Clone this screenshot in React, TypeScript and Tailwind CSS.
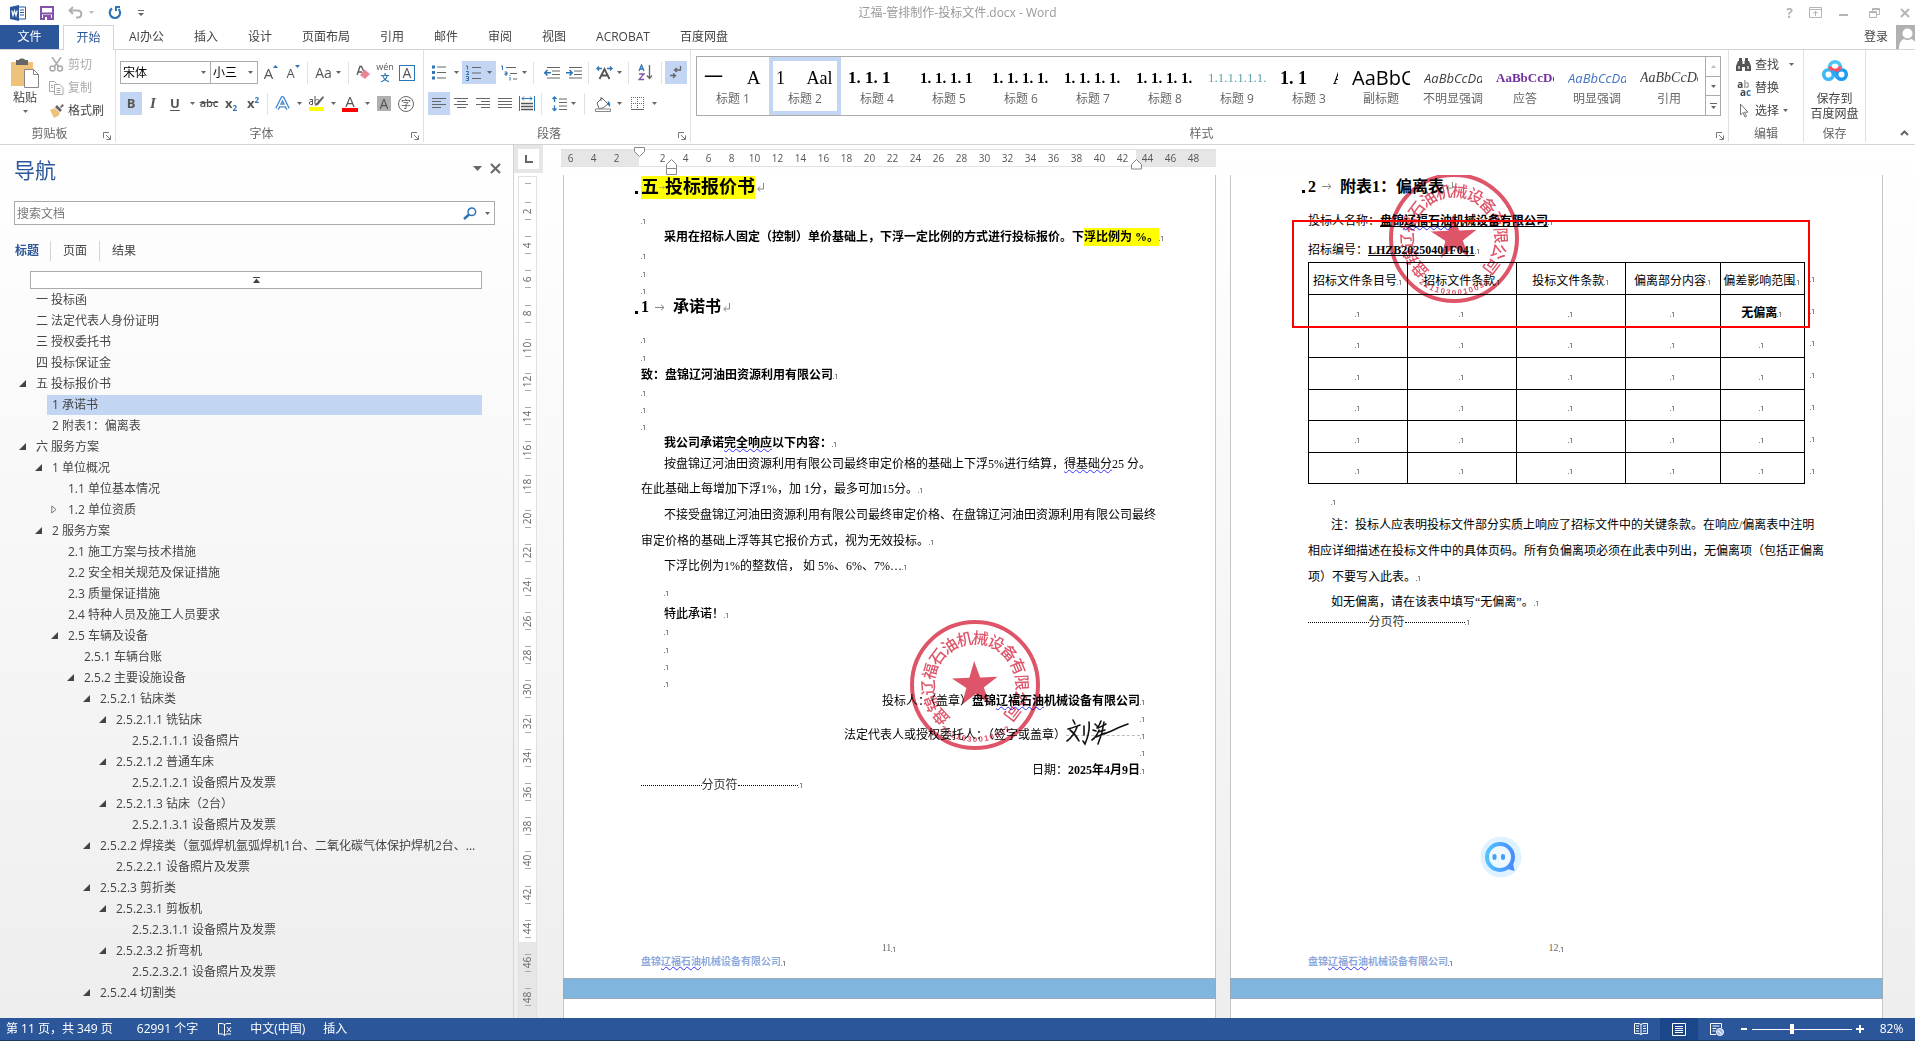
import type { ReactNode } from "react"
import { clsx } from "clsx"

const UI_FONT = "font-['Open_Sans','Noto_Sans_CJK_SC',sans-serif]"
const DOC_FONT = "font-['Liberation_Serif','Noto_Sans_CJK_SC',serif]"

const MENU_TABS = ["AI办公", "插入", "设计", "页面布局", "引用", "邮件", "审阅", "视图", "ACROBAT", "百度网盘"]

type OutlineItem = { level: number; text: string; state?: "open" | "closed"; selected?: boolean }

const OUTLINE: OutlineItem[] = [
  { level: 0, text: "一 投标函" },
  { level: 0, text: "二 法定代表人身份证明" },
  { level: 0, text: "三 授权委托书" },
  { level: 0, text: "四 投标保证金" },
  { level: 0, text: "五 投标报价书", state: "open" },
  { level: 1, text: "1 承诺书", selected: true },
  { level: 1, text: "2 附表1：偏离表" },
  { level: 0, text: "六 服务方案", state: "open" },
  { level: 1, text: "1 单位概况", state: "open" },
  { level: 2, text: "1.1 单位基本情况" },
  { level: 2, text: "1.2 单位资质", state: "closed" },
  { level: 1, text: "2 服务方案", state: "open" },
  { level: 2, text: "2.1 施工方案与技术措施" },
  { level: 2, text: "2.2 安全相关规范及保证措施" },
  { level: 2, text: "2.3 质量保证措施" },
  { level: 2, text: "2.4 特种人员及施工人员要求" },
  { level: 2, text: "2.5 车辆及设备", state: "open" },
  { level: 3, text: "2.5.1 车辆台账" },
  { level: 3, text: "2.5.2 主要设施设备", state: "open" },
  { level: 4, text: "2.5.2.1 钻床类", state: "open" },
  { level: 5, text: "2.5.2.1.1 铣钻床", state: "open" },
  { level: 6, text: "2.5.2.1.1.1 设备照片" },
  { level: 5, text: "2.5.2.1.2 普通车床", state: "open" },
  { level: 6, text: "2.5.2.1.2.1 设备照片及发票" },
  { level: 5, text: "2.5.2.1.3 钻床（2台）", state: "open" },
  { level: 6, text: "2.5.2.1.3.1 设备照片及发票" },
  { level: 4, text: "2.5.2.2 焊接类（氩弧焊机氩弧焊机1台、二氧化碳气体保护焊机2台、...", state: "open" },
  { level: 5, text: "2.5.2.2.1 设备照片及发票" },
  { level: 4, text: "2.5.2.3 剪折类", state: "open" },
  { level: 5, text: "2.5.2.3.1 剪板机", state: "open" },
  { level: 6, text: "2.5.2.3.1.1 设备照片及发票" },
  { level: 5, text: "2.5.2.3.2 折弯机", state: "open" },
  { level: 6, text: "2.5.2.3.2.1 设备照片及发票" },
  { level: 4, text: "2.5.2.4 切割类", state: "open" },
]

const STYLES = [
  { name: "标题 1", sample: "一　 A", css: "text-[19px] font-['Liberation_Serif','Noto_Sans_CJK_SC']" },
  { name: "标题 2", sample: "1　 Aal", css: "text-[18px] font-['Liberation_Serif','Noto_Sans_CJK_SC']", active: true },
  { name: "标题 4", sample: "1. 1. 1", css: "text-[17px] font-bold font-['Liberation_Serif']" },
  { name: "标题 5", sample: "1. 1. 1. 1", css: "text-[15px] font-bold font-['Liberation_Serif']" },
  { name: "标题 6", sample: "1. 1. 1. 1.", css: "text-[15px] font-bold font-['Liberation_Serif']" },
  { name: "标题 7", sample: "1. 1. 1. 1.", css: "text-[15px] font-bold font-['Liberation_Serif']" },
  { name: "标题 8", sample: "1. 1. 1. 1.", css: "text-[15px] font-bold font-['Liberation_Serif']" },
  { name: "标题 9", sample: "1.1.1.1.1.1.", css: "text-[13px] text-[#5fa3a8] font-['Liberation_Serif']" },
  { name: "标题 3", sample: "1. 1　  A", css: "text-[18px] font-bold font-['Liberation_Serif','Noto_Sans_CJK_SC']" },
  { name: "副标题", sample: "AaBbC", css: "text-[20px]" },
  { name: "不明显强调", sample: "AaBbCcDd", css: "text-[13px] italic text-[#404040]" },
  { name: "应答", sample: "AaBbCcDd", css: "text-[13px] font-bold text-[#7030a0] font-['Liberation_Serif']" },
  { name: "明显强调", sample: "AaBbCcDd", css: "text-[13px] italic text-[#4472c4]" },
  { name: "引用", sample: "AaBbCcDd", css: "text-[14px] italic text-[#404040] font-['Liberation_Serif']" },
]

const TABLE_HEAD = ["招标文件条目号", "招标文件条款", "投标文件条款", "偏离部分内容", "偏差影响范围"]

function evens(from: number, to: number) {
  const out: number[] = []
  for (let n = from; n <= to; n += 2) out.push(n)
  return out
}

/* ---------- small shared pieces ---------- */

function Caret({ className = "text-[#666]" }: { className?: string }) {
  return (
    <svg width="5" height="3" viewBox="0 0 5 3" className={clsx("shrink-0", className)} fill="currentColor">
      <path d="M0 0h5L2.500 3z" />
    </svg>
  )
}

function CaretBtn({ label, className = "w-3" }: { label: string; className?: string }) {
  return (
    <button type="button" aria-label={label} className={clsx("flex h-[23px] shrink-0 items-center justify-center", className)}>
      <Caret />
    </button>
  )
}

function Tool({ label, className = "w-[22px]", on, children }: { label: string; className?: string; on?: boolean; children: ReactNode }) {
  return (
    <button
      type="button"
      aria-label={label}
      className={clsx("flex h-[23px] shrink-0 items-center justify-center text-[#555]", className, on && "bg-[#c2d5f2]")}
    >
      {children}
    </button>
  )
}

function Sep() {
  return <span className="mx-[3px] h-[22px] w-px shrink-0 bg-[#e1e1e1]" />
}

function Group({ title, className, launcher, children }: { title: string; className?: string; launcher?: boolean; children: ReactNode }) {
  return (
    <section className={clsx("flex shrink-0 flex-col border-r border-[#e1e1e1]", className)}>
      <div className="flex-1">{children}</div>
      <div className="flex h-4 items-center text-[#666]">
        <span className="flex-1 text-center">{title}</span>
        {launcher && (
          <button type="button" aria-label={title + "设置"} className="w-4 pl-1 pt-1">
            <svg width="8" height="8" viewBox="0 0 8 8" fill="none" stroke="#777">
              <path d="M.5 6V.5H6M3 3l4 4M7.500 3.500v4h-4" />
            </svg>
          </button>
        )}
      </div>
    </section>
  )
}

/* ---------- title bar ---------- */

function TitleBar() {
  return (
    <header className="flex h-[25px] items-center justify-between">
      <div className="flex w-[220px] items-center pl-2.5">
        <svg width="16" height="16" viewBox="0 0 16 16" aria-label="Word">
          <path d="M8 2h7.500v12H8z" fill="#fff" stroke="#2b579a" />
          <path d="M10 5h4M10 7.500h4M10 10h4" stroke="#2b579a" />
          <path d="M0 2l9-2v16l-9-2z" fill="#2b579a" />
          <path d="M1.800 5.500l1.200 5 1.500-4.500L6 10.500l1.200-5" stroke="#fff" fill="none" strokeWidth="1.200" />
        </svg>
        <button type="button" aria-label="保存" className="ml-3.5">
          <svg width="14" height="14" viewBox="0 0 14 14">
            <path d="M1 1h12v12H1z" fill="#fff" stroke="#8452a8" strokeWidth="2" />
            <path d="M1 7.500h12" stroke="#8452a8" strokeWidth="2" />
            <path d="M3 9h8v4H3z" fill="#8452a8" />
            <path d="M5 11h2v3H5z" fill="#fff" />
          </svg>
        </button>
        <button type="button" aria-label="撤消" className="ml-3.5">
          <svg width="15" height="13" viewBox="0 0 15 13" fill="none" stroke="#b0b0b0" strokeWidth="2">
            <path d="M5 1L1.500 4.500 5 8M2 4.500h7.500c5 0 5 7 0 7H8" />
          </svg>
        </button>
        <span className="ml-1.5"><Caret className="text-[#bbb]" /></span>
        <button type="button" aria-label="重复" className="ml-3.5">
          <svg width="14" height="14" viewBox="0 0 14 14" fill="none" stroke="#2e75b6" strokeWidth="2.200">
            <path d="M4 2.500A5.200 5.200 0 1 0 10.500 3" />
            <path d="M7.500 1h4.500M8 0v5" strokeWidth="2" />
          </svg>
        </button>
        <button type="button" aria-label="自定义快速访问工具栏" className="ml-4">
          <svg width="6" height="6" viewBox="0 0 6 6" fill="#666"><path d="M0 0h6v1H0zM0 3h6L3 6z" /></svg>
        </button>
      </div>
      <h1 className="text-[#999]">辽福-管排制作-投标文件.docx - Word</h1>
      <div className="flex w-[220px] items-center justify-end gap-4 pr-[5px] text-[#b5b5b5]">
        <button type="button" aria-label="帮助" className="text-sm font-bold">?</button>
        <button type="button" aria-label="功能区显示选项">
          <svg width="13" height="11" viewBox="0 0 13 11" fill="none" stroke="currentColor"><path d="M.5.500h12v10H.5zM.5 2.500h12M6.500 9V4.500M4 6.500l2.500-2 2.500 2" /></svg>
        </button>
        <button type="button" aria-label="最小化">
          <svg width="11" height="10" viewBox="0 0 11 10" fill="currentColor"><path d="M1 6h9v2H1z" /></svg>
        </button>
        <button type="button" aria-label="还原" className="ml-1">
          <svg width="11" height="10" viewBox="0 0 11 10" fill="none" stroke="currentColor"><path d="M.5 3.500h7v6h-7zM.5 4.500h7M3.500 3V.5h7v6H8M3.500 1.500h7" /></svg>
        </button>
        <button type="button" aria-label="关闭" className="ml-1">
          <svg width="10" height="10" viewBox="0 0 10 10" stroke="currentColor" strokeWidth="2"><path d="M1 1l8 8M9 1L1 9" /></svg>
        </button>
      </div>
    </header>
  )
}

function MenuTabs() {
  return (
    <nav className="flex h-[25px] items-stretch border-b border-[#d4d4d4]">
      <button type="button" className="w-[59px] bg-[#2b579a] text-white">文件</button>
      <button type="button" className="-mb-px ml-1 w-[51px] border border-b-0 border-[#d4d4d4] bg-white text-[#2b579a]">开始</button>
      {MENU_TABS.map((tab) => (
        <button key={tab} type="button" className="px-[15px] text-[#444]">{tab}</button>
      ))}
      <div className="ml-auto flex items-stretch">
        <button type="button" className="pr-2 text-[#444]">登录</button>
        <svg width="19" height="24" viewBox="0 0 19 24" aria-label="账户">
          <path d="M0 0h19v24H0z" fill="#b1b1b1" />
          <circle cx="11.500" cy="8.500" r="5" fill="#fff" />
          <path d="M3 24c0-6 2-9 5-10 2 1.500 5 1.500 7 0 2 .5 3 1.500 4 3v7z" fill="#fff" />
        </svg>
      </div>
    </nav>
  )
}

/* ---------- ribbon groups ---------- */

function ClipboardGroup() {
  return (
    <Group title="剪贴板" launcher className="w-[116px]">
      <div className="flex pl-[11px]">
        <button type="button" className="flex w-7 flex-col items-center pt-2">
          <svg width="30" height="30" viewBox="0 0 30 30">
            <path d="M1 4h22v24H1z" fill="#eec27a" />
            <path d="M6 2h3c0-2 6-2 6 0h3v5H6z" fill="#666" />
            <path d="M14.500 11.500h9l5 5v13h-14z" fill="#fff" stroke="#888" />
            <path d="M23.500 11.500v5h5" fill="none" stroke="#888" />
          </svg>
          <span className="mt-0.5 whitespace-nowrap leading-4 text-[#444]">粘贴</span>
          <span className="pt-1"><Caret /></span>
        </button>
        <div className="ml-2.5 flex flex-col pt-[3px]">
          <button type="button" className="flex h-[23px] items-center gap-1 text-[#aaa]">
            <svg width="15" height="15" viewBox="0 0 15 15" fill="none" stroke="#aaa" strokeWidth="1.500">
              <path d="M3 0l6.500 9.500M12 0L5.500 9.500" />
              <circle cx="3.500" cy="11.500" r="2.500" /><circle cx="11" cy="11.500" r="2.500" />
            </svg>
            剪切
          </button>
          <button type="button" className="flex h-[23px] items-center gap-1 text-[#aaa]">
            <svg width="15" height="14" viewBox="0 0 15 14" fill="none" stroke="#aaa">
              <path d="M5 10.500H.5V.5h5l2 2" />
              <path d="M5.500 3.500h5l3.500 3v7H5.500zM7.500 7.500h4M7.500 9.500h4M7.500 11.500h4M2 4.500h2M2 6.500h2" />
            </svg>
            复制
          </button>
          <button type="button" className="flex h-[23px] items-center gap-1 text-[#444]">
            <svg width="15" height="14" viewBox="0 0 15 14">
              <path d="M1 6l5-2 5 5-2 3-4 2z" fill="#eec27a" />
              <path d="M6 3l2-2 5 5-2 2zM11 3l2.500-3L15 1.500 12 4z" fill="#666" />
            </svg>
            格式刷
          </button>
        </div>
      </div>
    </Group>
  )
}

function FontSelect({ label, value, className }: { label: string; value: string; className: string }) {
  return (
    <span className={clsx("relative flex h-[23px] shrink-0 items-center border border-[#ababab]", className)}>
      <select aria-label={label} className="h-full w-full appearance-none bg-transparent pl-0.5 text-black outline-none">
        <option>{value}</option>
      </select>
      <span className="pointer-events-none absolute right-1"><Caret /></span>
    </span>
  )
}

function FontGroup() {
  return (
    <Group title="字体" launcher className="w-[308px]">
      <div className="flex flex-col gap-2 pl-1 pt-[11px]">
        <div className="flex items-center">
          <FontSelect label="字体" value="宋体" className="w-[91px]" />
          <FontSelect label="字号" value="小三" className="-ml-px w-[48px]" />
          <Tool label="增大字号" className="ml-0.5 w-[22px]">
            <span className="text-[15px] leading-4">A</span>
            <svg width="5" height="3" viewBox="0 0 5 3" className="mb-3" fill="#2e75b6"><path d="M0 3h5L2.500 0z" /></svg>
          </Tool>
          <Tool label="减小字号">
            <span className="text-[13px] leading-4">A</span>
            <span className="mb-3"><Caret className="text-[#2e75b6]" /></span>
          </Tool>
          <Sep />
          <Tool label="更改大小写" className="w-[34px] gap-1"><span className="text-sm">Aa</span><Caret /></Tool>
          <Sep />
          <Tool label="清除所有格式">
            <svg width="15" height="15" viewBox="0 0 15 15">
              <path d="M1 10L4 1.500h1.500L8 7M2.500 7H6" stroke="#555" fill="none" strokeWidth="1.300" />
              <path d="M8.500 4.500L14 9l-5 5-5-4z" fill="#e88595" />
            </svg>
          </Tool>
          <Tool label="拼音指南">
            <span className="flex flex-col items-center">
              <span className="text-[9px] leading-[10px]">wén</span>
              <span className="text-[9px] font-bold leading-[11px] text-[#2e75b6]">文</span>
            </span>
          </Tool>
          <Tool label="字符边框">
            <span className="flex h-4 w-4 items-center justify-center border border-[#2e75b6] text-sm leading-none">A</span>
          </Tool>
        </div>
        <div className="flex items-center">
          <Tool label="加粗" on><b className="text-[13px]">B</b></Tool>
          <Tool label="倾斜"><i className="font-['Liberation_Serif'] text-[15px] font-bold">I</i></Tool>
          <Tool label="下划线"><span className="text-[13px] font-bold underline underline-offset-2">U</span></Tool>
          <CaretBtn label="下划线样式" />
          <Tool label="删除线"><span className="text-[11px] font-semibold line-through">abc</span></Tool>
          <Tool label="下标"><b className="text-[13px]">x</b><b className="pt-2 text-[8px] text-[#2e75b6]">2</b></Tool>
          <Tool label="上标"><b className="text-[13px]">x</b><b className="pb-2 text-[8px] text-[#2e75b6]">2</b></Tool>
          <Sep />
          <Tool label="文本效果">
            <svg width="15" height="15" viewBox="0 0 15 15" fill="none" strokeLinejoin="round">
              <path d="M2 13L7.500 2 13 13M4.500 9.500h6" stroke="#4a8ad0" strokeWidth="4" />
              <path d="M2 13L7.500 2 13 13M4.500 9.500h6" stroke="#fff" strokeWidth="1.500" />
            </svg>
          </Tool>
          <CaretBtn label="文本效果选项" />
          <Tool label="突出显示">
            <svg width="17" height="17" viewBox="0 0 17 17">
              <path d="M1 12h15v4H1z" fill="#ff0" />
              <path d="M15 1l1 1.500-6 7.500-3 1 1.500-3z" fill="#666" />
              <path d="M1.500 4.500h3v5h-2c-1.500 0-1.500-3 0-3h2M7 1v8.500M7 6c1-2 4-2 4 0s-2 4-4 3" stroke="#555" fill="none" />
            </svg>
          </Tool>
          <CaretBtn label="突出显示颜色" />
          <Tool label="字体颜色">
            <span className="flex w-4 flex-col items-center border-b-4 border-[#f00] text-[15px] leading-[13px]">A</span>
          </Tool>
          <CaretBtn label="更多字体颜色" />
          <Tool label="字符底纹">
            <span className="flex h-[15px] w-3.5 items-center justify-center bg-[#b0b0b0] text-sm leading-none">A</span>
          </Tool>
          <Tool label="带圈字符">
            <span className="flex h-4 w-4 items-center justify-center rounded-full border border-[#666] text-[10px] leading-none">字</span>
          </Tool>
        </div>
      </div>
    </Group>
  )
}

function Lines({ d }: { d: string }) {
  return (
    <svg width="15" height="13" viewBox="0 0 15 13" stroke="#666" fill="none"><path d={d} /></svg>
  )
}

function ParagraphGroup() {
  return (
    <Group title="段落" launcher className="w-[267px]">
      <div className="flex flex-col gap-2 pl-1 pt-[11px]">
        <div className="flex items-center">
          <Tool label="项目符号">
            <svg width="14" height="15" viewBox="0 0 14 15">
              <path d="M5 2h9M5 7.500h9M5 13h9" stroke="#666" />
              <path d="M0 .5h3v3H0zM0 6h3v3H0zM0 11.500h3v3H0z" fill="#2e75b6" />
            </svg>
          </Tool>
          <CaretBtn label="项目符号库" />
          <Tool label="编号" on className="w-[34px] gap-1.5">
            <svg width="15" height="16" viewBox="0 0 15 16">
              <path d="M6 2.500h9M6 8h9M6 13.500h9" stroke="#666" />
              <path d="M0 1h1.500v3.500M0 6.500h2.500V8L.5 9.500h2.500M0 11.500h2.500v4H0M.5 13.500h2" stroke="#2e75b6" fill="none" />
            </svg>
            <Caret />
          </Tool>
          <Tool label="多级列表" className="w-[34px] gap-1">
            <svg width="18" height="16" viewBox="0 0 18 16">
              <path d="M6 2.500h10M10 8.500h7M13 14h4" stroke="#666" />
              <path d="M1 1h1.500v4M4.500 7h2.500v3H5V8.500h2M10 12v3.500M10 10v1" stroke="#2e75b6" fill="none" />
            </svg>
            <Caret />
          </Tool>
          <Sep />
          <Tool label="减少缩进量" className="ml-1 w-[22px]">
            <svg width="16" height="12" viewBox="0 0 16 12" fill="none">
              <path d="M3 .5h13M8 4h8M8 7.500h8M3 11h13" stroke="#666" />
              <path d="M7 5.800H1M3.500 3L.8 5.800l2.700 2.700" stroke="#2e75b6" strokeWidth="1.600" />
            </svg>
          </Tool>
          <Tool label="增加缩进量">
            <svg width="16" height="12" viewBox="0 0 16 12" fill="none">
              <path d="M3 .5h13M8 4h8M8 7.500h8M3 11h13" stroke="#666" />
              <path d="M0 5.800h6M3.500 3l2.700 2.800-2.700 2.700" stroke="#2e75b6" strokeWidth="1.600" />
            </svg>
          </Tool>
          <Sep />
          <Tool label="中文版式" className="w-[33px] gap-1">
            <svg width="17" height="14" viewBox="0 0 17 14" fill="none">
              <path d="M3.500 13L8.500 3l5 10M5.500 9.500h6" stroke="#555" strokeWidth="1.800" />
              <path d="M6 2.500H1M3 .5l-2 2 2 2M11 2.500h5M14 .5l2 2-2 2" stroke="#2e75b6" strokeWidth="1.300" />
            </svg>
            <Caret />
          </Tool>
          <Sep />
          <Tool label="排序" className="w-[26px]">
            <svg width="15" height="17" viewBox="0 0 15 17" fill="none">
              <path d="M1 7l2.500-6L6 7M2 5h3" stroke="#2e75b6" strokeWidth="1.300" />
              <path d="M1 10h5l-5 5.500h5" stroke="#8452a8" strokeWidth="1.300" />
              <path d="M11.500 1v13M9 11.500l2.500 3 2.500-3" stroke="#666" strokeWidth="1.300" />
            </svg>
          </Tool>
          <Sep />
          <Tool label="显示编辑标记" on>
            <svg width="12" height="13" viewBox="0 0 12 13" fill="none" stroke="#666" strokeWidth="1.300">
              <path d="M10.500 0v4H5M7 2L4.500 4 7 6M0 9.500h5M3 7.500l2.500 2-2.500 2.500" />
            </svg>
          </Tool>
        </div>
        <div className="flex items-center">
          <Tool label="左对齐" on><Lines d="M0 1.500h14M0 4.500h9M0 7.500h14M0 10.500h9" /></Tool>
          <Tool label="居中"><Lines d="M0 1.500h14M3 4.500h9M0 7.500h14M3 10.500h9" /></Tool>
          <Tool label="右对齐"><Lines d="M0 1.500h14M5 4.500h9M0 7.500h14M5 10.500h9" /></Tool>
          <Tool label="两端对齐"><Lines d="M0 1.500h14M0 4.500h14M0 7.500h14M0 10.500h14" /></Tool>
          <Tool label="分散对齐">
            <svg width="16" height="15" viewBox="0 0 16 15" fill="none">
              <path d="M.5 0v15M15.500 0v15M3 2.500h10M5 .5l-2 2 2 2M11 .5l2 2-2 2" stroke="#2e75b6" />
              <path d="M2 7.500h12M2 10.500h12M2 13.500h12" stroke="#555" strokeWidth="1.500" />
            </svg>
          </Tool>
          <Sep />
          <Tool label="行距" className="ml-0.5 w-[34px] gap-1">
            <svg width="15" height="16" viewBox="0 0 15 16" fill="none">
              <path d="M7 3h8M7 6.500h8M7 10h8M7 13.500h8" stroke="#666" />
              <path d="M2.500 1v5M.5 3l2-2 2 2M2.500 9.500v5M.5 12.500l2 2 2-2" stroke="#2e75b6" strokeWidth="1.300" />
            </svg>
            <Caret />
          </Tool>
          <Sep />
          <Tool label="底纹" className="ml-0.5 w-[36px] gap-1.5">
            <svg width="16" height="16" viewBox="0 0 16 16" fill="none">
              <path d="M2 7l5-5 6 6-5 4-4 .5zM6 1v4" stroke="#666" />
              <path d="M13 5c2 1 2.500 3 2 6-1-1-2-2-2.500-3z" fill="#2e75b6" />
              <path d="M.5 13h15v2.500H.5z" stroke="#888" />
            </svg>
            <Caret />
          </Tool>
          <Tool label="边框" className="w-[36px] gap-2">
            <svg width="13" height="13" viewBox="0 0 13 13" fill="none" stroke="#666">
              <path d="M.5 0v12M6.500 0v12M12.500 0v12M0 .5h13M0 6.500h13" strokeDasharray="1 1" />
              <path d="M0 12.500h13" />
            </svg>
            <Caret />
          </Tool>
        </div>
      </div>
    </Group>
  )
}

function StylesGroup() {
  return (
    <Group title="样式" launcher className="min-w-0 flex-1">
      <div className="flex pl-[5px] pr-[7px] pt-1.5">
        <div className="flex h-[60px] flex-1 overflow-hidden border border-[#ababab]">
          {STYLES.map((s) => (
            <button
              key={s.name}
              type="button"
              className={clsx(
                "flex w-[72px] shrink-0 flex-col items-center border-4 px-[3px] pt-0.5 text-black",
                s.active ? "border-[#c2d5f2]" : "border-transparent",
              )}
            >
              <span className={clsx("h-7 w-full overflow-hidden whitespace-pre text-left leading-[30px]", s.css)}>{s.sample}</span>
              <span className="whitespace-nowrap leading-4 text-[#666]">{s.name}</span>
            </button>
          ))}
          <div className="ml-auto flex w-[15px] flex-col divide-y divide-[#ababab] border-l border-[#ababab]">
            <button type="button" aria-label="上一行" className="flex flex-1 items-center justify-center">
              <svg width="5" height="3" viewBox="0 0 5 3" fill="#bbb"><path d="M0 3h5L2.500 0z" /></svg>
            </button>
            <button type="button" aria-label="下一行" className="flex flex-1 items-center justify-center"><Caret /></button>
            <button type="button" aria-label="其他样式" className="flex flex-1 items-center justify-center">
              <svg width="7" height="6" viewBox="0 0 7 6" fill="#666"><path d="M0 0h7v1H0zM1 3h5L3.500 6z" /></svg>
            </button>
          </div>
        </div>
      </div>
    </Group>
  )
}

function EditGroup() {
  return (
    <Group title="编辑" className="w-[75px]">
      <div className="flex flex-col pl-[7px] pt-[3px] text-[#444]">
        <button type="button" className="flex h-[23px] items-center gap-1">
          <svg width="15" height="13" viewBox="0 0 15 13" fill="#555">
            <path d="M2 3h1V0h3v3h.5v3h2V3H9V0h3v3h1l2 5v5H9V9H6v4H0V8z" />
            <path d="M2 8h2v3H2zM11 8h2v3h-2z" fill="#bbb" />
          </svg>
          查找 <span className="pl-1.5"><Caret /></span>
        </button>
        <button type="button" className="flex h-[23px] items-center gap-1">
          <span className="flex w-[15px] flex-col text-[10px] font-bold leading-[8px]">
            <span>a<span className="text-[#aaa]">b</span></span>
            <span className="pl-1">a<span className="text-[#2e75b6]">c</span></span>
          </span>
          替换
        </button>
        <button type="button" className="flex h-[23px] items-center gap-1">
          <svg width="15" height="15" viewBox="0 0 15 15" fill="#fff" stroke="#777"><path d="M4.500 1v11l2.500-2.500 2 4.500 1.500-.8-2-4H12z" /></svg>
          选择<Caret />
        </button>
      </div>
    </Group>
  )
}

function SaveGroup() {
  return (
    <Group title="保存" className="w-[62px]">
      <button type="button" className="flex w-full flex-col items-center pt-[10px] leading-[15px] text-[#444]">
        <svg width="26" height="22" viewBox="0 0 26 22" fill="none" strokeWidth="3.500">
          <circle cx="6.500" cy="14.500" r="4.800" stroke="#3fb8f5" />
          <circle cx="19.500" cy="14.500" r="4.800" stroke="#1e9bf5" />
          <path d="M7.500 9A5.700 5.700 0 1 1 18.500 9" stroke="#4cc6f7" />
          <path d="M7.600 6.500a5.700 5.700 0 0 0 10.800 0" stroke="#f25566" />
          <path d="M10 11l6 7" stroke="#2aa8f5" />
        </svg>
        <span className="mt-[9px] whitespace-nowrap">保存到</span>
        <span className="whitespace-nowrap">百度网盘</span>
      </button>
    </Group>
  )
}

function Ribbon() {
  return (
    <div className="flex h-[95px] border-b border-[#d4d4d4] pb-0.5">
      <ClipboardGroup />
      <FontGroup />
      <ParagraphGroup />
      <StylesGroup />
      <EditGroup />
      <SaveGroup />
      <div className="flex w-[49px] items-end justify-end pb-1.5 pr-1.5">
        <button type="button" aria-label="折叠功能区">
          <svg width="9" height="6" viewBox="0 0 9 6" fill="none" stroke="#666" strokeWidth="2"><path d="M1 5l3.500-3.500L8 5" /></svg>
        </button>
      </div>
    </div>
  )
}

/* ---------- navigation pane ---------- */

function OutlineRow({ item }: { item: OutlineItem }) {
  return (
    <li className="flex h-[21px] items-center" style={{ paddingLeft: 17 + item.level * 16 }}>
      <span className="flex w-3.5 shrink-0 pl-0.5">
        {item.state === "open" && (
          <svg width="7" height="7" viewBox="0 0 7 7" fill="#444"><path d="M7 0v7H0z" /></svg>
        )}
        {item.state === "closed" && (
          <svg width="6" height="9" viewBox="0 0 6 9" fill="none" stroke="#777"><path d="M.8 1v7L5 4.500z" /></svg>
        )}
      </span>
      <a
        href="#doc"
        className={clsx("mr-[31px] h-5 flex-1 truncate pl-[5px] leading-5 text-[#444]", item.selected && "bg-[#c2d5f2]")}
      >
        {item.text}
      </a>
    </li>
  )
}

function NavPane() {
  return (
    <aside className="flex w-[514px] shrink-0 flex-col border-r border-[#d4d4d4]">
      <div className="flex items-start justify-between pl-3.5 pr-3 pt-2">
        <h2 className="text-[21px] leading-[34px] text-[#2b579a]">导航</h2>
        <div className="flex items-center gap-2 pt-2.5">
          <button type="button" aria-label="窗格选项">
            <svg width="9" height="5" viewBox="0 0 9 5" fill="#666"><path d="M0 0h9L4.500 5z" /></svg>
          </button>
          <button type="button" aria-label="关闭窗格">
            <svg width="11" height="11" viewBox="0 0 11 11" stroke="#666" strokeWidth="2"><path d="M1 1l9 9M10 1l-9 9" /></svg>
          </button>
        </div>
      </div>
      <div className="ml-3.5 mr-[18px] mt-3.5 flex h-6 items-center border border-[#ababab] bg-white pr-1">
        <input aria-label="搜索文档" placeholder="搜索文档" className="h-full min-w-0 flex-1 pl-0.5 outline-none placeholder:text-[#777]" />
        <button type="button" aria-label="搜索">
          <svg width="14" height="13" viewBox="0 0 14 13" fill="none" stroke="#2e75b6">
            <circle cx="8.800" cy="4.800" r="3.800" strokeWidth="1.500" />
            <path d="M6 7.500L1 12" strokeWidth="2.500" />
          </svg>
        </button>
        <button type="button" aria-label="搜索选项" className="pl-2"><Caret /></button>
      </div>
      <div className="mt-4 flex h-5 items-center pl-[15px] text-[#444]">
        <button type="button" className="pr-[11px] font-bold text-[#2b579a]">标题</button>
        <button type="button" className="h-5 border-l border-[#d4d4d4] px-3">页面</button>
        <button type="button" className="h-5 border-l border-[#d4d4d4] px-3">结果</button>
      </div>
      <button type="button" aria-label="跳转到开头" className="ml-[30px] mr-[31px] mt-[10px] flex h-[18px] shrink-0 items-center justify-center border border-[#ababab] bg-white">
        <svg width="7" height="6" viewBox="0 0 7 6" fill="#444"><path d="M0 0h7v1H0zM3.500 1.500L7 6H0z" /></svg>
      </button>
      <ul>
        {OUTLINE.map((item) => <OutlineRow key={item.text} item={item} />)}
      </ul>
    </aside>
  )
}

/* ---------- rulers ---------- */

function VerticalRuler() {
  return (
    <div className="flex w-[29px] shrink-0 flex-col text-[10px] text-[#666]">
      <div className="h-7 bg-[#e6e6e6] p-1">
        <div className="flex h-full items-center justify-center bg-white">
          <svg width="8" height="8" viewBox="0 0 8 8" fill="none" stroke="#666" strokeWidth="2"><path d="M1 0v7h7" /></svg>
        </div>
      </div>
      <div className="ml-1 mt-[3px] flex w-[19px] flex-1 flex-col border-x border-t border-[#e1e1e1] bg-linear-to-b from-white from-[765px] to-[#e6e6e6] to-[765px]">
        <span className="mx-auto mt-1.5 h-px w-1.5 bg-[#aaa]" />
        <div className="mb-1 mt-2.5 flex flex-1 flex-col">
          {evens(2, 48).map((n) => (
            <span key={n} className="flex flex-1 items-center justify-center">
              <span className="flex h-[18px] w-1.5 items-center justify-center border-y border-[#aaa]">
                <span className="-rotate-90">{n}</span>
              </span>
            </span>
          ))}
        </div>
      </div>
    </div>
  )
}

function RulerNumbers({ values }: { values: number[] }) {
  return values.map((n) => <span key={n} className="w-[23px] shrink-0 text-center">{n}</span>)
}

function HorizontalRuler() {
  return (
    <div className="relative ml-[18px] mt-1 flex h-[18px] w-[655px] shrink-0 items-stretch border-y border-[#e1e1e1] text-[10px] leading-4 text-[#555]">
      <div className="flex w-[78px] justify-end bg-[#e6e6e6] pr-[11px]">
        <RulerNumbers values={[6, 4, 2]} />
      </div>
      <div className="flex flex-1 bg-white pl-3">
        <RulerNumbers values={evens(2, 42)} />
      </div>
      <div className="flex w-20 bg-[#e6e6e6]">
        <RulerNumbers values={[44, 46, 48]} />
      </div>
      <svg className="absolute -top-[3px] left-[73px]" width="11" height="11" viewBox="0 0 11 11" fill="#fff" stroke="#888"><path d="M.5.500h10v4l-5 5-5-5z" /></svg>
      <svg className="absolute left-[105px] top-[9px]" width="11" height="16" viewBox="0 0 11 16" fill="#fff" stroke="#888"><path d="M.5 9.500v-4l5-5 5 5v10H.5zM.5 9.500h10" /></svg>
      <svg className="absolute left-[570px] top-[9px]" width="11" height="11" viewBox="0 0 11 11" fill="#fff" stroke="#888"><path d="M.5 10v-4.500l5-5 5 5v4.500z" /></svg>
    </div>
  )
}

/* ---------- document ---------- */

// paragraph mark shown at the end of each line
function Mark() {
  return (
    <svg width="6" height="6" viewBox="0 0 6 6" className="inline shrink-0" fill="#888"><path d="M0 5h1v1H0zM2 1h2v5H3V2H2z" /></svg>
  )
}

function Return() {
  return (
    <svg width="7" height="9" viewBox="0 0 7 9" className="ml-0.5 inline" fill="none" stroke="#888"><path d="M6.500 0v6H1M3 3.500L.8 6 3 8.500" /></svg>
  )
}

function TabArrow({ className }: { className?: string }) {
  return (
    <svg width="10" height="7" viewBox="0 0 10 7" className={clsx("inline shrink-0", className)} fill="none" stroke="#888"><path d="M0 3.500h9M6 .8l3 2.700-3 2.700" /></svg>
  )
}

function Line({ h = "h-[17px]", className, children }: { h?: string; className?: string; children?: ReactNode }) {
  return (
    <p className={clsx("flex items-center whitespace-nowrap", h, className)}>
      <span>{children}<Mark /></span>
    </p>
  )
}

// right-aligned lines let their paragraph mark hang into the margin
function SignLine({ h, children }: { h?: string; children?: ReactNode }) {
  return <Line h={h} className="-mr-2 justify-end">{children}</Line>
}

function PageBreak() {
  return (
    <div className="flex h-[14px] w-[163px] items-center text-[#333]">
      <span className="flex-1 border-b border-dotted border-black" />
      分页符
      <span className="flex-1 border-b border-dotted border-black" />
      <Mark />
    </div>
  )
}

function Squiggle({ children }: { children: ReactNode }) {
  return <span className="underline decoration-[#33f] decoration-wavy decoration-1 underline-offset-1">{children}</span>
}

const STAMP_NAME = "盘锦辽福石油机械设备有限公司"
const STAMP_CODE = "2111030010032"

function Stamp({ className }: { className: string }) {
  return (
    <svg width="132" height="132" viewBox="-66 -66 132 132" className={clsx("pointer-events-none absolute mix-blend-multiply", className)} fill="#d9364f" opacity="0.850">
      <circle r="63" fill="none" stroke="#d9364f" strokeWidth="4" />
      <path d="M0-24L5.400-7.400H22.800L8.700 2.800 14.100 19.400 0 9.200-14.100 19.400-8.700 2.800-22.800-7.400H-5.400z" transform="rotate(-2)" />
      {[...STAMP_NAME].map((c, i) => (
        <text key={i} y="-41" textAnchor="middle" fontSize="16" fontWeight="500" fontFamily="Noto Sans CJK SC" transform={`rotate(${-133 + i * 20})`}>{c}</text>
      ))}
      {[...STAMP_CODE].map((c, i) => (
        <text key={i} y="57" textAnchor="middle" fontSize="8" fontWeight="700" fontFamily="Liberation Sans" transform={`rotate(${36 - i * 6})`}>{c}</text>
      ))}
    </svg>
  )
}

function Signature() {
  return (
    <svg width="64" height="28" viewBox="0 0 64 28" className="absolute right-[86px] top-[543px]" fill="none" stroke="#111" strokeLinecap="round" strokeWidth="1.600">
      <path d="M8 2l2 4M3 11c5-1 9-3 12-4M12 9C10 15 6 20 2 23M5 12c4 3 7 7 9 11M19 8v9M24 4c1 8-1 15-4 22l-2-3M30 6l2 2M28 12l3 1M27 22c4-3 6-7 7-10M36 3c-1 3-2 5-4 7M33 10c3-1 6-3 8-4M33 14l7-2M31 19l9-4M39 4c-1 8-3 15-6 22M39 16c8-3 15-7 24-10" />
    </svg>
  )
}

function Page({ number, children }: { number: number; children: ReactNode }) {
  return (
    <article className="flex min-w-0 flex-1 flex-col">
      <div className="relative flex min-h-[803px] flex-col border-x border-[#c6c6c6] bg-white px-[77px]">
        {children}
        <footer className="mt-auto pb-[9px]">
          <p className="text-center text-[10px] leading-[14px] text-[#666]">{number}<Mark /></p>
          <p className="text-[10px] font-bold leading-[14px] text-[#8faadc]">
            盘锦<Squiggle>辽福石油</Squiggle>机械设备有限公司<Mark />
          </p>
        </footer>
      </div>
      <div className="h-[21px] shrink-0 border border-[#9aa9b5] bg-[#80b5dd]" />
      <div className="flex-1 border-x border-[#c6c6c6] bg-white" />
    </article>
  )
}

function HeadingDot() {
  return <span className="absolute left-[71px] mt-2.5 h-[3px] w-[3px] bg-black" />
}

function PromisePage() {
  return (
    <Page number={11}>
      <h3 className="mt-px flex h-[23px] items-center text-[18px] font-bold">
        <HeadingDot />
        <span className="flex h-full items-center whitespace-nowrap bg-[#ff0]">五<TabArrow className="w-1.5" />投标报价书</span>
        <Return />
      </h3>
      <Line className="mt-3" />
      <Line h="h-[18px]" className="pl-[23px] font-bold">
        采用在招标人固定（控制）单价基础上，下浮一定比例的方式进行投标报价。下
        <span className="bg-[#ff0] py-0.5">浮比例为 %。</span>
      </Line>
      <Line h="h-[18px]" />
      <Line />
      <Line />
      <h3 className="flex h-[18px] items-center whitespace-nowrap text-[16px] font-bold">
        <HeadingDot />1<TabArrow className="ml-1.5 mr-2" />承诺书<Return />
      </h3>
      <Line h="h-[18px]" className="mt-3.5" />
      <Line h="h-[18px]" />
      <Line className="font-bold">致：盘锦辽河油田资源利用有限公司</Line>
      <Line />
      <Line />
      <Line />
      <Line className="pl-[23px] font-bold">我公司承诺<Squiggle>完全响应</Squiggle>以下内容：</Line>
      <p className="flex h-[25px] items-center whitespace-nowrap pl-[23px]">
        <span>按盘锦辽河油田资源利用有限公司最终审定价格的基础上下浮5%进行结算，<Squiggle>得基础分</Squiggle>25 分。</span>
      </p>
      <Line h="h-[26px]">在此基础上每增加下浮1%，加 1分，最多可加15分。</Line>
      <p className="flex h-[26px] items-center whitespace-nowrap pl-[23px]">不接受盘锦辽河油田资源利用有限公司最终审定价格、在盘锦辽河油田资源利用有限公司最终</p>
      <Line h="h-[25px]">审定价格的基础上浮等其它报价方式，视为无效投标。</Line>
      <Line h="h-[26px]" className="pl-[23px]">下浮比例为1%的整数倍， 如 5%、6%、7%…</Line>
      <Line h="h-[26px]" className="pl-[23px]" />
      <Line className="pl-[23px] font-medium">特此承诺！</Line>
      <Line h="h-[18px]" className="pl-[23px]" />
      <Line className="pl-[23px]" />
      <Line className="pl-[23px]" />
      <Line h="h-[18px]" className="pl-[23px]" />
      <SignLine>投标人：（盖章）<b>盘锦<Squiggle>辽福石油</Squiggle>机械设备有限公司</b></SignLine>
      <SignLine />
      <SignLine>法定代表人或授权委托人：（签字或盖章）<span className="inline-block w-[74px] border-b border-dashed border-[#bbb] align-middle" /></SignLine>
      <SignLine h="h-[18px]" />
      <SignLine>日期：<b>2025年4月9日</b></SignLine>
      <PageBreak />
      <Stamp className="right-[174px] top-[444px]" />
      <Signature />
    </Page>
  )
}

function DeviationPage() {
  return (
    <Page number={12}>
      <h3 className="flex h-[23px] items-center whitespace-nowrap text-[16px] font-bold">
        <HeadingDot />2<TabArrow className="ml-1.5 mr-2" />附表1：偏离表<Return />
      </h3>
      <Line h="h-[18px]" className="mt-[14px]">
        投标人名称：<b className="underline">盘锦<Squiggle>辽福石油</Squiggle>机械设备有限公司</b>
      </Line>
      <Line h="h-[24px]" className="mt-2">招标编号：<b className="underline">LHZB20250401F041</b></Line>
      <table className="w-full table-fixed border-collapse text-center">
        <colgroup>
          <col className="w-[20%]" />
          <col className="w-[22%]" />
          <col className="w-[22%]" />
          <col className="w-[19%]" />
          <col className="w-[17%]" />
        </colgroup>
        <thead>
          <tr className="h-8">
            {TABLE_HEAD.map((h) => (
              <th key={h} className="whitespace-nowrap border border-black pt-1 font-normal leading-4">{h}<Mark /></th>
            ))}
          </tr>
        </thead>
        <tbody>
          {[0, 1, 2, 3, 4, 5].map((row) => (
            <tr key={row} className={row % 2 ? "h-[31px]" : "h-8"}>
              {TABLE_HEAD.map((h, col) => (
                <td key={h} className="border border-black pt-1 leading-4">
                  {row === 0 && col === 4 && <b>无偏离</b>}<Mark />
                </td>
              ))}
            </tr>
          ))}
        </tbody>
      </table>
      {/* end-of-row marks to the right of the table */}
      <div className="absolute right-[66px] top-[101px] flex flex-col">
        {[0, 1, 2, 3, 4, 5, 6].map((row) => (
          <span key={row} className="flex h-8 items-start"><Mark /></span>
        ))}
      </div>
      <Line className="mt-2 pl-[23px]" />
      <div className="mt-[3px]">
        <p className="flex h-[26px] items-center whitespace-nowrap pl-[23px]">注：投标人应表明投标文件部分实质上响应了招标文件中的关键条款。在响应/偏离表中注明</p>
        <p className="flex h-[26px] items-center whitespace-nowrap">相应详细描述在投标文件中的具体页码。所有负偏离项必须在此表中列出，无偏离项（包括正偏离</p>
        <Line h="h-[25px]">项）不要写入此表。</Line>
        <Line h="h-[26px]" className="pl-[23px]">如无偏离，请在该表中填写“无偏离”。</Line>
      </div>
      <PageBreak />
      <div className="absolute inset-x-0 top-0 h-[140px] overflow-hidden mix-blend-multiply">
        <Stamp className="-top-[3px] left-[157px]" />
      </div>
      <div className="pointer-events-none absolute left-[61px] right-[72px] top-[45px] h-[108px] border-2 border-[#f00]" />
      <button type="button" aria-label="智能助手" className="absolute left-[249px] top-[661px]">
        <svg width="42" height="42" viewBox="0 0 42 42" fill="none">
          <defs>
            <linearGradient id="bubble" x1="0" x2="1">
              <stop stopColor="#52c1ff" />
              <stop offset="1" stopColor="#4a8cff" />
            </linearGradient>
          </defs>
          <circle cx="21" cy="21" r="20.500" fill="#dff2ff" />
          <circle cx="20" cy="21" r="13" fill="#eef8ff" stroke="url(#bubble)" strokeWidth="4" />
          <path d="M28 33l5-6 1.500 8z" fill="#4a8cff" />
          <rect x="12.500" y="18" width="4" height="6" rx="2" fill="#459dff" />
          <rect x="21" y="18" width="4" height="6" rx="2" fill="#459dff" />
        </svg>
      </button>
    </Page>
  )
}

/* ---------- status bar ---------- */

function StatusBar() {
  return (
    <footer className="flex h-[23px] shrink-0 items-center border-b border-[#1d3a66] bg-[#2b579a] text-white">
      <button type="button" className="pl-1.5">第 11 页，共 349 页</button>
      <button type="button" className="pl-6">62991 个字</button>
      <button type="button" aria-label="校对" className="pl-5">
        <svg width="14" height="13" viewBox="0 0 14 13" fill="none" stroke="#fff">
          <path d="M6.500 1.500v11l-2-1.500h-4V.5h4zM6.500 1.500l2-1H13M6.500 12.500l2-1.500H13M9 4l4 5M13 4L9 9" />
        </svg>
      </button>
      <button type="button" className="pl-[18px]">中文(中国)</button>
      <button type="button" className="pl-[18px]">插入</button>
      <div className="ml-auto flex h-full items-center">
        <button type="button" aria-label="阅读视图" className="flex h-full w-[38px] items-center justify-center">
          <svg width="14" height="12" viewBox="0 0 14 12" fill="none" stroke="#fff"><path d="M7 1.500v10L5 10.500H.5V.5H5zM7 1.500l2-1h4.500v10H9l-2 1M2 3h3M2 5.500h3M2 8h3M9 3h3M9 5.500h3M9 8h3" /></svg>
        </button>
        <button type="button" aria-label="页面视图" className="flex h-full w-[38px] items-center justify-center bg-[#19478a]">
          <svg width="14" height="13" viewBox="0 0 14 13" fill="none" stroke="#fff"><path d="M.5.500h13v12H.5zM3 3.500h8M3 5.500h8M3 7.500h8M3 9.500h8" /></svg>
        </button>
        <button type="button" aria-label="Web 版式视图" className="flex h-full w-[38px] items-center justify-center">
          <svg width="14" height="13" viewBox="0 0 14 13" fill="none" stroke="#fff"><path d="M6 11.500H.5V.5h11V5M2.500 3h7M2.500 5.500h4M2.500 8h3" /><circle cx="10" cy="9" r="3.500" fill="#9db8dd" /><path d="M8 8l2 1 1 2" /></svg>
        </button>
        <button type="button" aria-label="缩小" className="flex h-full w-4 items-center justify-center">
          <svg width="6" height="2" viewBox="0 0 6 2" fill="#fff"><path d="M0 0h6v2H0z" /></svg>
        </button>
        <input
          type="range"
          aria-label="显示比例"
          min="10"
          max="190"
          defaultValue="82"
          className="h-[10px] w-[100px] appearance-none bg-transparent bg-linear-to-b from-white to-white bg-[length:100%_1px] bg-center bg-no-repeat [&::-webkit-slider-thumb]:h-[10px] [&::-webkit-slider-thumb]:w-1 [&::-webkit-slider-thumb]:appearance-none [&::-webkit-slider-thumb]:bg-white"
        />
        <button type="button" aria-label="放大" className="flex h-full w-4 items-center justify-center">
          <svg width="8" height="8" viewBox="0 0 8 8" fill="#fff"><path d="M3 0h2v3h3v2H5v3H3V5H0V3h3z" /></svg>
        </button>
        <button type="button" className="w-[47px]">82%</button>
      </div>
    </footer>
  )
}

export default function App() {
  return (
    <div className={clsx("flex h-screen flex-col overflow-hidden bg-white text-[12px]", UI_FONT)}>
      <TitleBar />
      <MenuTabs />
      <Ribbon />
      <div className="flex min-h-0 flex-1 bg-linear-to-b from-white to-[#eee]">
        <NavPane />
        <VerticalRuler />
        <main id="doc" className="flex min-w-0 flex-1 flex-col">
          <HorizontalRuler />
          <div className={clsx("mt-2 flex min-h-0 flex-1 gap-[14px] overflow-hidden pl-5 pr-8 text-[12px] text-black", DOC_FONT)}>
            <PromisePage />
            <DeviationPage />
          </div>
        </main>
      </div>
      <StatusBar />
    </div>
  )
}
